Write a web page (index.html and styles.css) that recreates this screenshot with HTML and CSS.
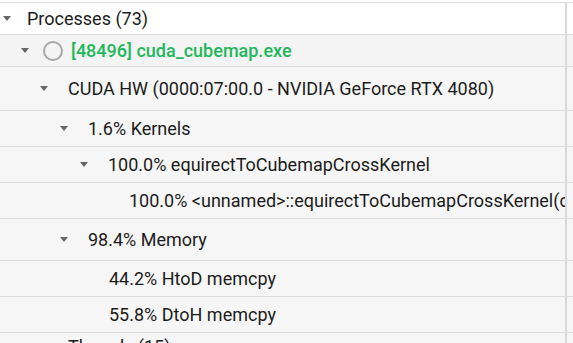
FILE: index.html
```html
<!DOCTYPE html>
<html lang="en">
<head>
    <meta charset="UTF-8">
    <title>Processes</title>
    <link rel="stylesheet" href="styles.css">
</head>
<body>
    <div class="tree">
        <div class="row top">
            <div class="cell d0"><span class="caret"></span><span class="label">Processes (73)</span></div>
        </div>
        <div class="row process-row">
            <div class="cell d1"><span class="caret"></span><span class="status"></span><span class="label process">[48496] cuda_cubemap.exe</span></div>
        </div>
        <div class="row tall">
            <div class="cell d2"><span class="caret"></span><span class="label">CUDA HW (0000:07:00.0 - NVIDIA GeForce RTX 4080)</span></div>
        </div>
        <div class="row">
            <div class="cell d3"><span class="caret"></span><span class="label">1.6% Kernels</span></div>
        </div>
        <div class="row">
            <div class="cell d4"><span class="caret"></span><span class="label">100.0% equirectToCubemapCrossKernel</span></div>
        </div>
        <div class="row">
            <div class="cell d5"><span class="leaf"></span><span class="label">100.0% &lt;unnamed&gt;::equirectToCubemapCrossKernel(cudaTextureObject_t, float *, int)</span></div>
        </div>
        <div class="row mid">
            <div class="cell d3"><span class="caret"></span><span class="label">98.4% Memory</span></div>
        </div>
        <div class="row">
            <div class="cell d4"><span class="leaf"></span><span class="label">44.2% HtoD memcpy</span></div>
        </div>
        <div class="row">
            <div class="cell d4"><span class="leaf"></span><span class="label">55.8% DtoH memcpy</span></div>
        </div>
        <div class="row last">
            <div class="cell d2"><span class="caret"></span><span class="label">Threads (15)</span></div>
        </div>
    </div>
</body>
</html>
```

FILE: styles.css
```css
body {
    margin: 0;
    background-color: #ffffff;
    font-family: Roboto, "Liberation Sans", sans-serif;
    font-size: 18px;
    color: #1c1c1c;
    overflow: hidden;
}

.tree {
    margin-top: 2px;
    border-top: 1px solid #dcdcdc;
}

.row {
    display: flex;
    height: 35px;
    border-bottom: 1px solid #dcdcdc;
    background-color: #f6f6f6;
}

.row::after {
    content: "";
    flex: 1;
    border-left: 2px solid #d9d9d9;
}

.row.top {
    height: 31px;
    background-color: #ffffff;
}

.row.process-row {
    height: 31px;
    background-color: #f4f4f4;
}

.row.tall {
    height: 43px;
}

.row.mid {
    height: 41px;
}

.row.last {
    height: 26px;
}

.cell {
    width: 565px;
    flex: none;
    display: flex;
    align-items: center;
    overflow: hidden;
    white-space: nowrap;
    box-sizing: border-box;
}

.d0 { padding-left: 3px; }
.d1 { padding-left: 21px; }
.d2 { padding-left: 40px; }
.d3 { padding-left: 60px; }
.d4 { padding-left: 80px; }
.d5 { padding-left: 100px; }

.leaf {
    flex: none;
    width: 9px;
    margin-right: 20px;
}

.caret {
    flex: none;
    width: 0;
    height: 0;
    border-left: 4.5px solid transparent;
    border-right: 4.5px solid transparent;
    border-top: 5px solid #666666;
    margin-right: 20px;
}

.d0 .caret {
    margin-right: 16px;
}

.d1 .caret {
    margin-right: 14px;
}

.status {
    flex: none;
    width: 16px;
    height: 16px;
    border: 2px solid #a8a8a8;
    border-radius: 50%;
    margin-right: 8px;
}

.label.process {
    color: #1fb85c;
    font-weight: 500;
}
```
